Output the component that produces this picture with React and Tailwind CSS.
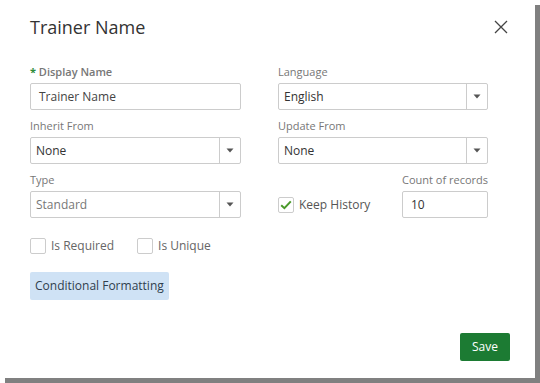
import React from "react";

const font = { fontFamily: '"Open Sans", "Noto Sans", sans-serif' };

function Label({ children, className = "" }) {
  return (
    <div className={`h-4 leading-4 text-[11px] text-[#777] mb-[3px] whitespace-nowrap ${className}`}>{children}</div>
  );
}

function Select({ value, muted }) {
  return (
    <div className="h-[27px] border border-[#cccccc] rounded-[2px] flex items-stretch bg-white">
      <div className={`flex-1 flex items-center pl-[5px] pt-[1px] text-[12px] ${muted ? "text-[#777]" : "text-[#333]"}`}>{value}</div>
      <div className="w-[21px] border-l border-[#cccccc] flex items-center justify-center">
        <svg width="8" height="5" viewBox="0 0 8 5"><path d="M0.5 0.5 L7.5 0.5 L4 4.5 Z" fill="#555" /></svg>
      </div>
    </div>
  );
}

function Checkbox({ checked }) {
  return (
    <div className="w-[16px] h-[16px] border border-[#cccccc] rounded-[2px] bg-white flex items-center justify-center">
      {checked && (
        <svg width="12" height="10" viewBox="0 0 12 10">
          <path d="M1.2 5.2 L4.4 8.2 L10.8 1.4" stroke="#4a9a2a" strokeWidth="2" fill="none" />
        </svg>
      )}
    </div>
  );
}

export default function App() {
  return (
    <div className="w-[540px] h-[383px] bg-white" style={font}>
      <div className="w-[535px] h-[378px] bg-white shadow-[5px_5px_0_#808080] relative px-[30px]">
        <div className="flex items-center justify-between h-[52px] pt-[1px]">
          <div className="text-[18px] text-[#333] leading-none">Trainer Name</div>
          <svg width="14" height="14" viewBox="0 0 14 14" className="mr-[-3px]">
            <path d="M1 1 L13 13 M13 1 L1 13" stroke="#444" strokeWidth="1.3" />
          </svg>
        </div>
        <div className="grid grid-cols-[211px_210px] gap-x-[37px] mt-[12px]">
          <div>
            <Label className="font-semibold text-[#666]">
              <span className="text-[#2e8b3a] font-bold">*</span> Display Name
            </Label>
            <div className="h-[27px] border border-[#cccccc] rounded-[2px] flex items-center pl-[8px] pt-[1px] text-[12px] text-[#444]">
              Trainer Name
            </div>
          </div>
          <div>
            <Label>Language</Label>
            <Select value="English" />
          </div>
          <div className="mt-[8px]">
            <Label>Inherit From</Label>
            <Select value="None" />
          </div>
          <div className="mt-[8px]">
            <Label>Update From</Label>
            <Select value="None" />
          </div>
          <div className="mt-[8px]">
            <Label>Type</Label>
            <Select value="Standard" muted />
          </div>
          <div className="mt-[8px] flex items-end justify-between">
            <div className="h-[27px] flex items-center gap-[5px]">
              <Checkbox checked />
              <span className="text-[12px] text-[#555]">Keep History</span>
            </div>
            <div className="w-[86px]">
              <Label className="text-right">Count of records</Label>
              <div className="h-[27px] border border-[#cccccc] rounded-[2px] flex items-center pl-[8px] pt-[1px] text-[12px] text-[#333]">10</div>
            </div>
          </div>
        </div>
        <div className="flex items-center mt-[20px] h-[16px]">
          <div className="flex items-center gap-[5px]">
            <Checkbox />
            <span className="text-[12px] text-[#666]">Is Required</span>
          </div>
          <div className="flex items-center gap-[5px] ml-[23px]">
            <Checkbox />
            <span className="text-[12px] text-[#666]">Is Unique</span>
          </div>
        </div>
        <div className="mt-[18px] flex">
          <div className="h-[28px] px-[5px] bg-[#cfe2f5] rounded-[2px] flex items-center text-[12px] text-[#2f3e4e]">
            Conditional Formatting
          </div>
        </div>
        <div className="flex justify-end mt-[33px] mr-[-5px]">
          <div className="w-[50px] h-[28px] bg-[#1c7b33] rounded-[2px] flex items-center justify-center text-[12px] text-white">
            Save
          </div>
        </div>
      </div>
    </div>
  );
}
